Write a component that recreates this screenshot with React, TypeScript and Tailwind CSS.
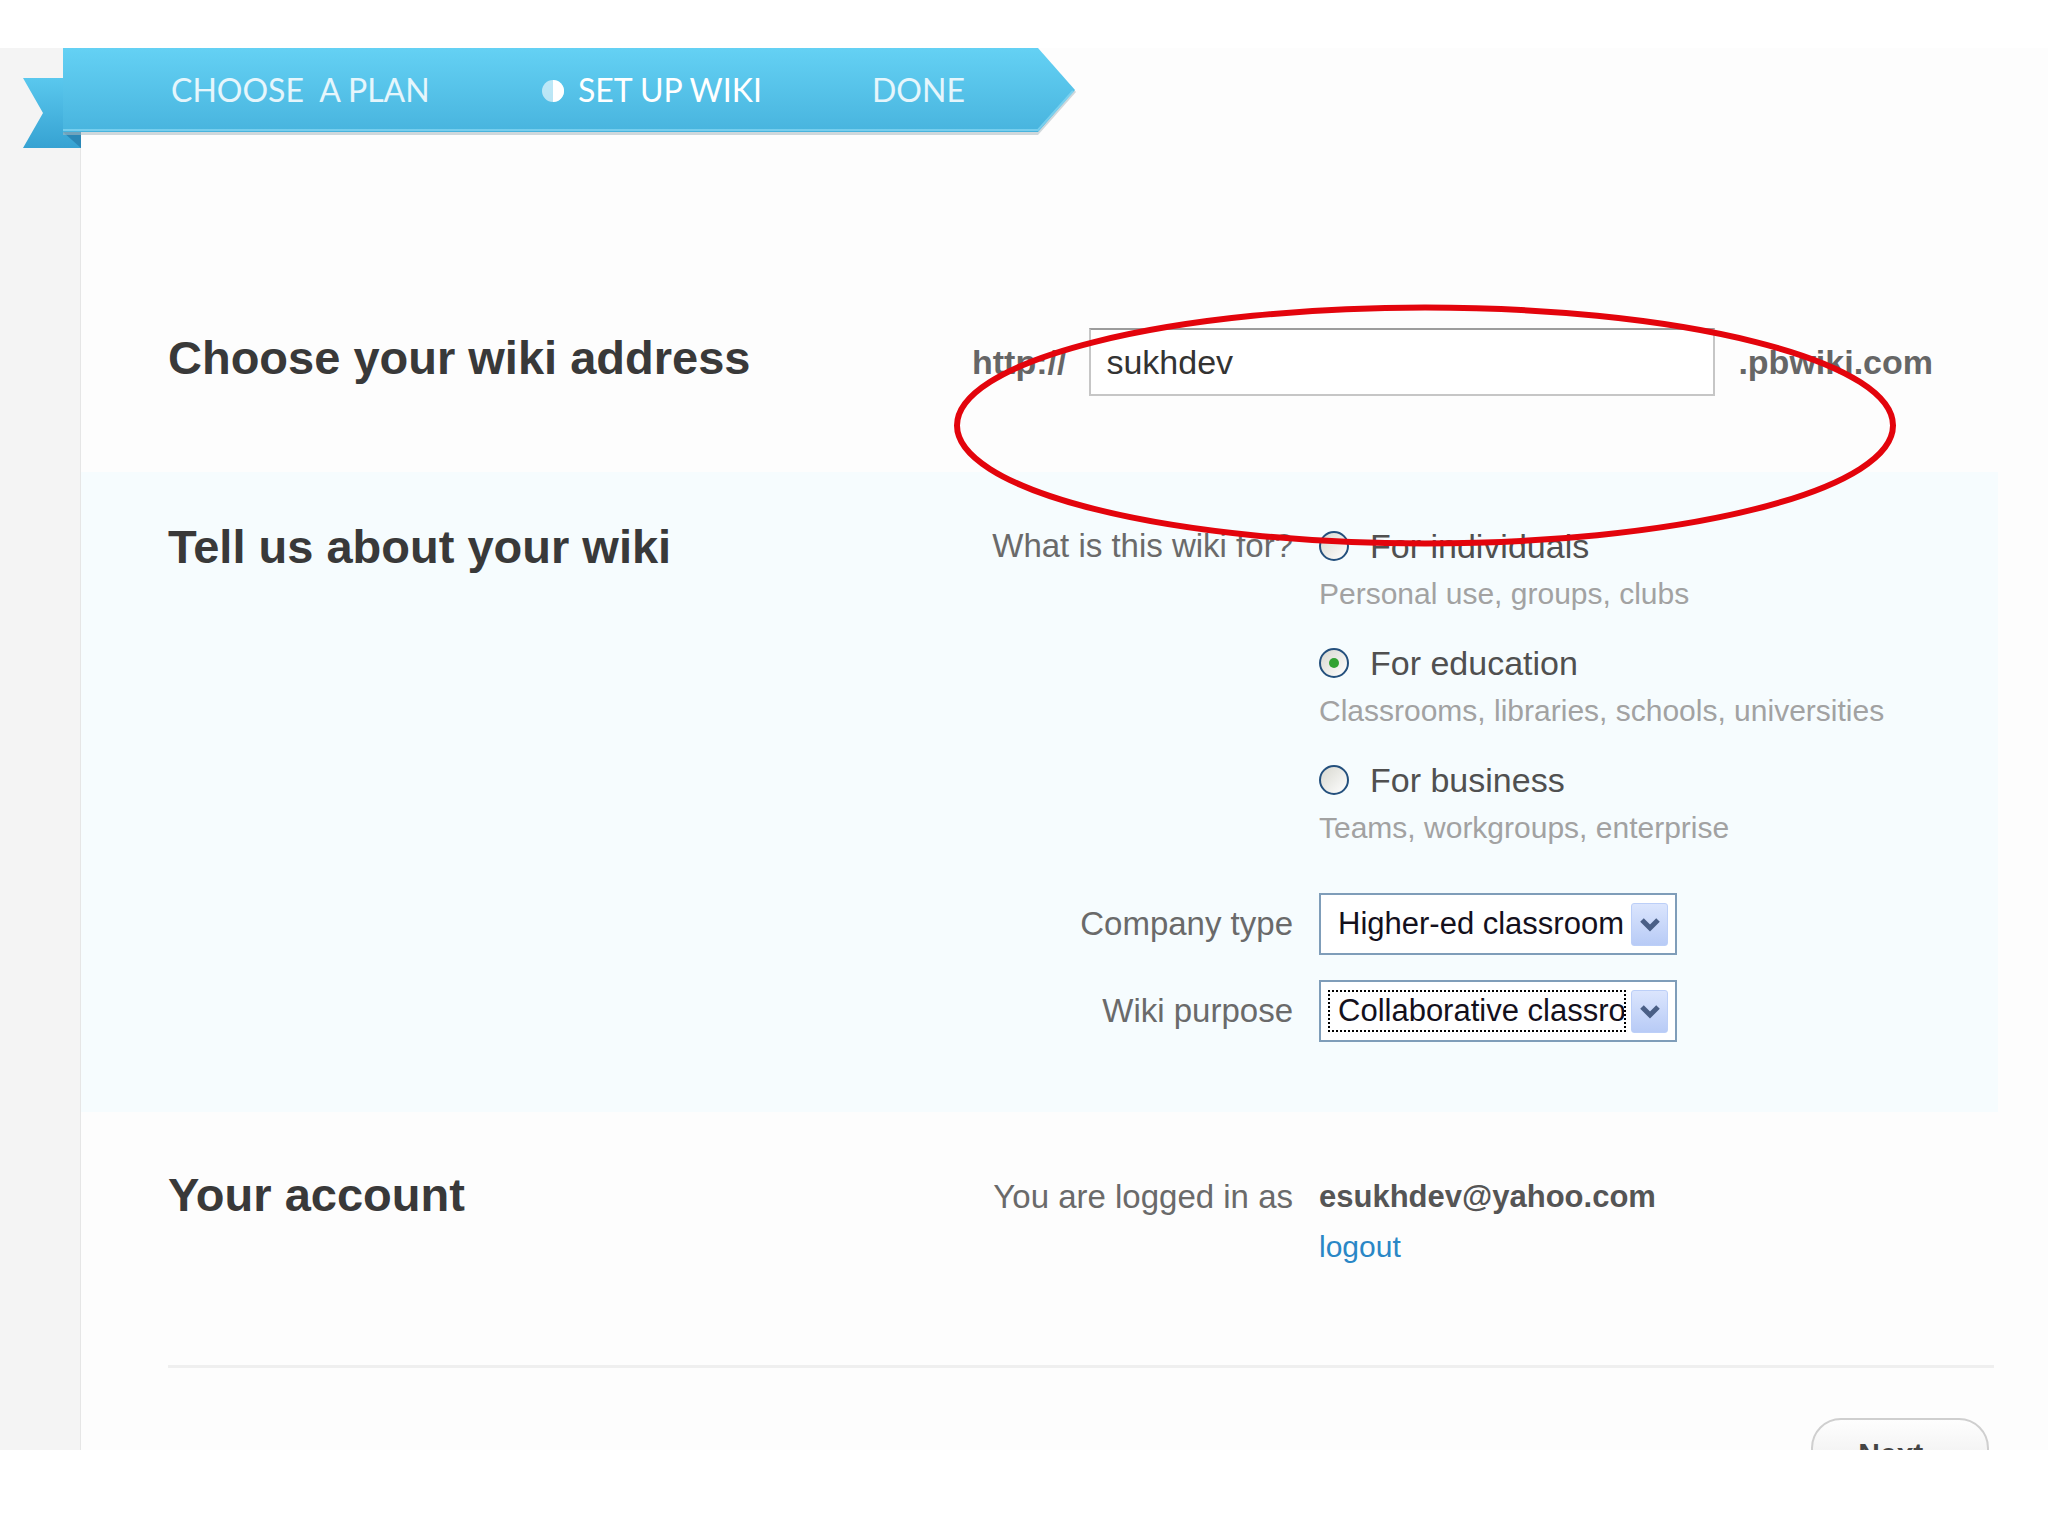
import React from "react";

const Pie = () => (
  <svg width="24" height="24" viewBox="0 0 24 24" className="shrink-0 mt-[2px]">
    <circle cx="12" cy="12" r="11" fill="#ffffff" fillOpacity="0.6" />
    <path d="M12 1 A11 11 0 0 1 12 23 Z" fill="#ffffff" />
  </svg>
);

const Ribbon = () => (
  <div className="relative -ml-[58px] w-[1052px] h-[84px] shrink-0 font-['Lato',sans-serif] text-[32px] leading-[40px]">
    <svg className="absolute left-0 top-0 overflow-visible" width="1052" height="100" viewBox="0 0 1052 100">
      <defs>
        <linearGradient id="rb-body" x1="0" y1="0" x2="0" y2="1">
          <stop offset="0" stopColor="#64d1f4" />
          <stop offset="1" stopColor="#48b4de" />
        </linearGradient>
        <linearGradient id="rb-tail" x1="0" y1="0" x2="0" y2="1">
          <stop offset="0" stopColor="#5ac8ee" />
          <stop offset="1" stopColor="#36a2d2" />
        </linearGradient>
      </defs>
      <polygon points="0,30 58,30 58,100 0,100 20,65" fill="url(#rb-tail)" />
      <polygon points="40,84 58,84 58,100" fill="#2a87b6" />
      <polygon points="40,2 1015,2 1053,44 1015,87 40,87" fill="#a9b9c1" fillOpacity="0.55" />
      <polygon points="40,0 1015,0 1052,42 1015,84 40,84" fill="url(#rb-body)" />
      <polyline points="40,82 1015,82 1050,43" stroke="#8ad9f3" strokeWidth="2" fill="none" strokeOpacity="0.7" />
    </svg>
    <div className="relative flex items-center h-full pl-[148px] whitespace-pre">
      <span className="w-[370px] text-white/85">CHOOSE  A PLAN</span>
      <span className="w-[331px] flex items-center gap-[13px] text-white">
        <Pie />
        SET UP WIKI
      </span>
      <span className="text-white/85">DONE</span>
    </div>
  </div>
);

const Radio = ({ checked }: { checked?: boolean }) => (
  <span className="w-[30px] h-[30px] rounded-full border-2 border-[#24507d] bg-gradient-to-br from-[#d8d8d0] to-white flex items-center justify-center shrink-0">
    {checked && <span className="w-[10px] h-[10px] rounded-full bg-[#32a232]" />}
  </span>
);

const Option = ({ label, sub, checked }: { label: string; sub: string; checked?: boolean }) => (
  <div className="flex flex-col">
    <div className="flex items-center h-[40px] gap-[21px]">
      <Radio checked={checked} />
      <span className="text-[34px] leading-[40px] text-[#505050]">{label}</span>
    </div>
    <div className="mt-[10px] text-[30px] leading-[36px] text-[#a2a2a2] whitespace-nowrap">{sub}</div>
  </div>
);

const Chevron = () => (
  <span className="w-[37px] h-[43px] rounded-[3px] bg-gradient-to-b from-[#dbe5fd] to-[#b8cbf6] border border-[#bccff8] flex items-center justify-center shrink-0">
    <svg width="22" height="16" viewBox="0 0 22 16">
      <polyline points="3,4 11,12 19,4" stroke="#4a5f86" strokeWidth="5" fill="none" />
    </svg>
  </span>
);

const Select = ({ value, focused }: { value: string; focused?: boolean }) => (
  <div className="w-[358px] h-[62px] border-2 border-[#7f9db9] bg-white flex items-center pl-[7px] pr-[7px] gap-[5px]">
    <div
      className={
        focused
          ? "flex-1 min-w-0 h-[42px] flex items-center pl-[8px] overflow-hidden whitespace-nowrap text-[31px] text-[#14101c] border-2 border-dotted border-black"
          : "flex-1 min-w-0 h-[42px] flex items-center pl-[8px] overflow-hidden whitespace-nowrap text-[31px] text-[#14101c] border-2 border-transparent"
      }
    >
      {value}
    </div>
    <Chevron />
  </div>
);

const Heading = ({ children }: { children: React.ReactNode }) => (
  <h2 className="w-[804px] shrink-0 text-[47px] leading-[56px] font-bold text-[#393939]">{children}</h2>
);

export default function App() {
  return (
    <div className="relative w-[2048px] h-[1536px] bg-white overflow-hidden font-['Liberation_Sans',Arial,sans-serif]">
      <div className="flex mt-[48px] h-[1402px]">
        <div className="w-[81px] shrink-0 bg-[#f4f4f4] border-r border-[#e6e6e6]" />
        <div className="flex-1 bg-[#fdfdfd] flex flex-col">
          <Ribbon />

          {/* wiki address */}
          <section className="h-[340px] shrink-0 pl-[87px] pt-[196px] flex items-start">
            <div className="mt-[2px]">
              <Heading>Choose your wiki address</Heading>
            </div>
            <div className="flex items-center gap-[23px] h-[68px]">
              <span className="text-[34px] font-bold text-[#666]">http://</span>
              <div className="w-[626px] h-[68px] bg-white border-2 border-[#c6c6c6] border-t-[#9c9c9c] flex items-center pl-[15px] text-[34px] text-[#333]">
                sukhdev
              </div>
              <span className="text-[34px] font-bold text-[#666]">.pbwiki.com</span>
            </div>
          </section>

          {/* about wiki */}
          <section className="h-[640px] shrink-0 mr-[50px] bg-[#f6fcfe] pl-[87px] pt-[47px] flex items-start">
            <Heading>Tell us about your wiki</Heading>
            <div className="flex flex-col mt-[7px]">
              <div className="flex items-start gap-[26px]">
                <span className="w-[321px] text-right text-[33px] leading-[40px] text-[#6a6a6a] whitespace-nowrap">What is this wiki for?</span>
                <div className="flex flex-col gap-[31px]">
                  <Option label="For individuals" sub="Personal use, groups, clubs" />
                  <Option label="For education" sub="Classrooms, libraries, schools, universities" checked />
                  <Option label="For business" sub="Teams, workgroups, enterprise" />
                </div>
              </div>
              <div className="flex items-center gap-[26px] mt-[47px]">
                <span className="w-[321px] text-right text-[33px] text-[#6a6a6a]">Company type</span>
                <Select value="Higher-ed classroom" />
              </div>
              <div className="flex items-center gap-[26px] mt-[25px]">
                <span className="w-[321px] text-right text-[33px] text-[#6a6a6a]">Wiki purpose</span>
                <Select value="Collaborative classroom" focused />
              </div>
            </div>
          </section>

          {/* account */}
          <section className="h-[253px] shrink-0 pl-[87px] pt-[55px] flex items-start">
            <Heading>Your account</Heading>
            <div className="flex items-start gap-[26px] mt-[10px]">
              <span className="w-[321px] text-right text-[33px] leading-[40px] text-[#6a6a6a] whitespace-nowrap">You are logged in as</span>
              <div className="flex flex-col">
                <span className="text-[31px] leading-[40px] font-bold text-[#555]">esukhdev@yahoo.com</span>
                <a className="mt-[10px] text-[30px] leading-[40px] text-[#2a87c6]">logout</a>
              </div>
            </div>
          </section>

          <div className="ml-[87px] mr-[54px] h-[3px] shrink-0 bg-[#efefef]" />

          <div className="flex-1 min-h-0 overflow-hidden flex justify-end items-start pt-[50px] pr-[59px]">
            <button className="w-[178px] h-[60px] shrink-0 rounded-t-[30px] border-2 border-[#cfcfcf] bg-gradient-to-b from-[#fefefe] to-[#ececec] pt-[14px] text-[30px] leading-[40px] font-bold text-[#444] flex justify-center items-start">
              Next ›
            </button>
          </div>
        </div>
      </div>

      {/* red annotation ellipse */}
      <svg className="absolute left-[953px] top-[304px]" width="944" height="243" viewBox="0 0 944 243">
        <ellipse cx="472" cy="121.5" rx="468" ry="118" fill="none" stroke="#e3040c" strokeWidth="6" />
      </svg>
    </div>
  );
}
